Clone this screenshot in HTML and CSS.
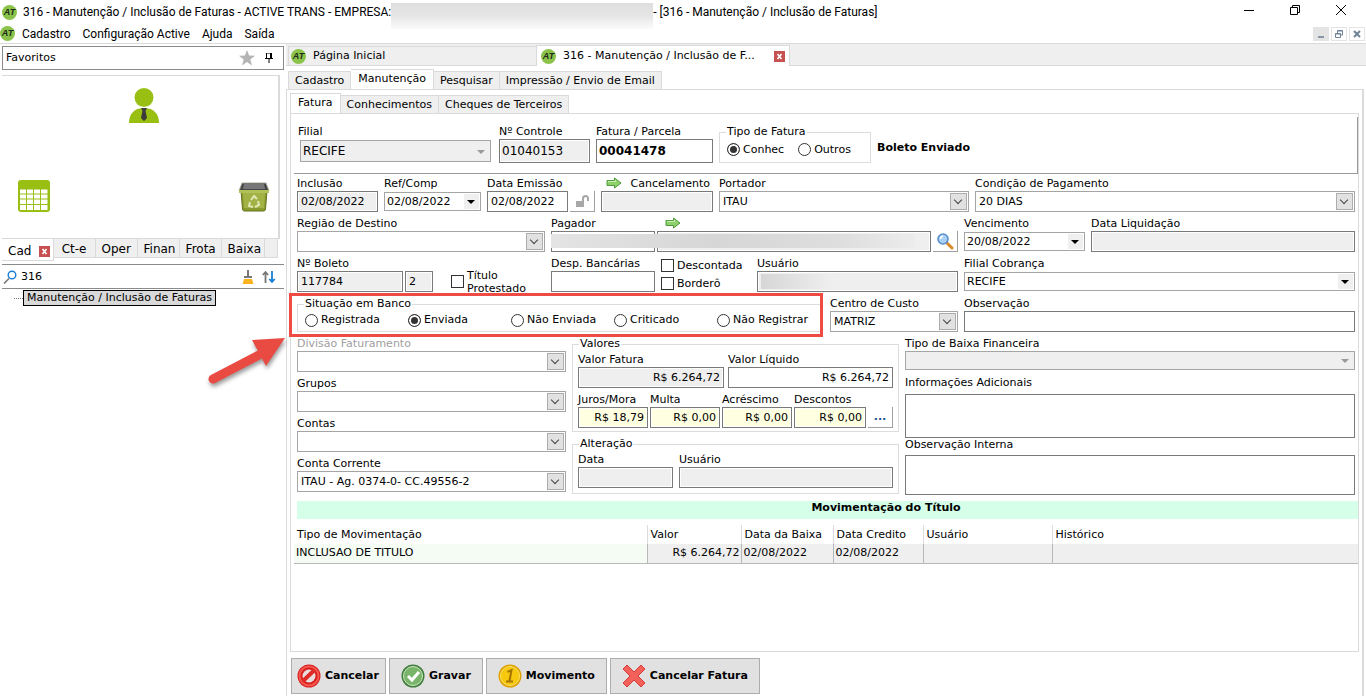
FILE: index.html
```html
<!DOCTYPE html>
<html lang="pt-BR">
<head>
    <meta charset="UTF-8">
    <meta name="viewport" content="width=device-width, initial-scale=1.0">
    <title>316 - Manutenção / Inclusão de Faturas</title>
    <link rel="stylesheet" href="styles.css">
</head>
<body>
    <svg class="sprite" aria-hidden="true">
        <symbol id="go" viewBox="0 0 16 12">
            <path d="M1 3.5h7.5V1L15 6l-6.500 5V8.500H1z" fill="#8fd06a" stroke="#4f9a3c" stroke-linejoin="round"/>
            <path d="M2 4.500h7.500V3" fill="none" stroke="#c9efb4"/>
        </symbol>
        <symbol id="close" viewBox="0 0 11 11">
            <path d="M0 0h11v11H0z" fill="#c75050"/>
            <path d="M3.500 3l4 5M7.500 3l-4 5" stroke="#fff" stroke-width="1.600"/>
        </symbol>
    </svg>

    <header class="titlebar">
        <span class="logo">AT</span>
        <span class="title">316 - Manutenção / Inclusão de Faturas - ACTIVE TRANS - EMPRESA:</span>
        <span class="title-mask"></span>
        <span class="title-end">- [316 - Manutenção / Inclusão de Faturas]</span>
        <div class="window-buttons">
            <button type="button" aria-label="Minimizar"><svg width="10" height="10" viewBox="0 0 10 10"><path d="M0 5.500h10" stroke="#000"/></svg></button>
            <button type="button" aria-label="Restaurar"><svg width="10" height="10" viewBox="0 0 10 10" fill="none" stroke="#000"><path d="M.5 2.500h7v7h-7zM2.500 2.500v-2h7v7h-2"/></svg></button>
            <button type="button" aria-label="Fechar"><svg width="10" height="10" viewBox="0 0 10 10"><path d="M0 0l10 10M10 0L0 10" stroke="#000"/></svg></button>
        </div>
    </header>

    <nav class="menubar">
        <span class="logo">AT</span>
        <a href="#">Cadastro</a>
        <a href="#">Configuração Active</a>
        <a href="#">Ajuda</a>
        <a href="#">Saída</a>
        <div class="mdi-buttons">
            <button type="button" class="filled" aria-label="Minimizar janela"><svg width="8" height="8" viewBox="0 0 8 8"><path d="M1 7h6" stroke="#8795a5" stroke-width="2"/></svg></button>
            <button type="button" aria-label="Restaurar janela"><svg width="8" height="8" viewBox="0 0 8 8" fill="none" stroke="#71839a"><path d="M.5 3.500h5v4h-5zM.5 4h5M2.500 3V.5h5v4.500H6M2.500 1h5"/></svg></button>
            <button type="button" aria-label="Fechar janela"><svg width="8" height="8" viewBox="0 0 8 8"><path d="M1 1l6 6M7 1L1 7" stroke="#71839a" stroke-width="2"/></svg></button>
        </div>
    </nav>

    <div class="workspace">
        <aside class="sidebar">
            <div class="fav-header">
                <span>Favoritos</span>
                <svg width="16" height="16" viewBox="0 0 16 16"><path d="M8 0l2.100 5.600 5.900.2-4.700 3.700L13 15.500 8 12l-5 3.500 1.700-6L0 5.800l5.900-.2z" fill="#b4b4b4"/></svg>
                <svg width="8" height="10" viewBox="0 0 8 10"><path d="M1.500 0h5v5.500h-5zM0 5.500h8M4 6v4" fill="none" stroke="#000"/><path d="M5.500 0v5.500" stroke="#000"/></svg>
            </div>
            <div class="fav-panel">
                <svg class="fav-user" width="30" height="35" viewBox="0 0 30 35">
                    <circle cx="15" cy="9.500" r="9.500" fill="#98bf11"/>
                    <path d="M0 35C0 24 7 20 15 20s15 4 15 15z" fill="#98bf11"/>
                    <path d="M12 20h6l-1.500 3L18 30l-3 3-3-3 1.500-7z" fill="#3b3b3b"/>
                </svg>
                <svg class="fav-table" width="32" height="32" viewBox="0 0 32 32">
                    <rect width="32" height="32" rx="3" fill="#98bf11"/>
                    <path d="M2 9.500h6v4H2zM9 9.500h6v4H9zM16 9.500h6v4h-6zM23 9.500h6.500v4H23zM2 14.500h6v4H2zM9 14.500h6v4H9zM16 14.500h6v4h-6zM23 14.500h6.500v4H23zM2 19.500h6v4.500H2zM9 19.500h6v4.500H9zM16 19.500h6v4.500h-6zM23 19.500h6.500v4.500H23zM2 25h6v5H2zM9 25h6v5H9zM16 25h6v5h-6zM23 25h6.500v5H23z" fill="#fff"/>
                </svg>
                <svg class="fav-trash" width="32" height="30" viewBox="0 0 32 30">
                    <path d="M3 9h26l-1.500 18q0 2-2 2h-19q-2 0-2-2z" fill="#8b9a2f" stroke="#66731f"/>
                    <path d="M5 11h22l-1 15H6z" fill="#a3b244"/>
                    <path d="M4 1h24l3 8H1z" fill="#454545" stroke="#a9a99e"/>
                    <path d="M6 2h20l1 5H5z" fill="#77777a"/>
                    <path d="M1 8h30v3H1z" fill="#b2c258"/>
                    <path d="M13 18l3-4 3 3M20 19l1 4-4 2M15 25l-4-1 1-4" fill="none" stroke="#e0e8b8" stroke-width="2"/>
                </svg>
            </div>
            <nav class="fav-tabs">
                <a href="#" class="active">Cad <svg class="close"><use href="#close"/></svg></a>
                <a href="#">Ct-e</a>
                <a href="#">Oper</a>
                <a href="#">Finan</a>
                <a href="#">Frota</a>
                <a href="#">Baixa</a>
                <span></span>
            </nav>
            <div class="search">
                <svg width="14" height="14" viewBox="0 0 14 14" fill="none"><path d="M6 8.500L1 13.500" stroke="#777" stroke-width="1.600"/><circle cx="9" cy="5" r="3.800" stroke="#1a7fd4" stroke-width="1.400"/></svg>
                <input type="text" aria-label="Pesquisar menu" value="316">
                <svg width="12" height="14" viewBox="0 0 12 14"><path d="M5 0h2v6h3v2H2V6h3z" fill="#777"/><path d="M2 9h8l1.500 5H.5z" fill="#fbb11b"/></svg>
                <svg width="14" height="14" viewBox="0 0 14 14" fill="none" stroke-width="1.800"><path d="M3.500 13V2M.8 5l2.700-3 2.700 3" stroke="#777"/><path d="M10 1v11M7.300 9l2.700 3 2.700-3" stroke="#1a7fd4"/></svg>
            </div>
            <div class="tree"><a href="#">Manutenção / Inclusão de Faturas</a></div>
        </aside>

        <main class="content">
            <nav class="doc-tabs">
                <a href="#"><span class="logo">AT</span>Página Inicial</a>
                <a href="#" class="active"><span class="logo">AT</span>316 - Manutenção / Inclusão de F...<svg class="close"><use href="#close"/></svg></a>
            </nav>
            <nav class="tabs">
                <a href="#">Cadastro</a>
                <a href="#" class="active">Manutenção</a>
                <a href="#">Pesquisar</a>
                <a href="#">Impressão / Envio de Email</a>
            </nav>
            <section class="page">
                <nav class="tabs inner">
                    <a href="#" class="active">Fatura</a>
                    <a href="#">Conhecimentos</a>
                    <a href="#">Cheques de Terceiros</a>
                </nav>
                <form class="invoice">
                    <div class="invoice-head">
                        <div class="field">
                            <label for="filial">Filial</label>
                            <span class="select flat off"><select id="filial" disabled><option>RECIFE</option></select></span>
                        </div>
                        <div class="field">
                            <label for="controle">Nº Controle</label>
                            <input type="text" id="controle" value="01040153" class="big" readonly>
                        </div>
                        <div class="field">
                            <label for="parcela">Fatura / Parcela</label>
                            <input type="text" id="parcela" value="00041478" class="big strong">
                        </div>
                        <fieldset class="type">
                            <legend>Tipo de Fatura</legend>
                            <label><input type="radio" name="tipo" checked>Conhec</label>
                            <label><input type="radio" name="tipo">Outros</label>
                        </fieldset>
                        <strong class="status">Boleto Enviado</strong>
                    </div>

                    <div class="row row-dates">
                        <div class="field">
                            <label for="inclusao">Inclusão</label>
                            <input type="text" id="inclusao" value="02/08/2022" readonly>
                        </div>
                        <div class="field">
                            <label for="ref">Ref/Comp</label>
                            <span class="select flat"><select id="ref"><option>02/08/2022</option></select></span>
                        </div>
                        <div class="field">
                            <label for="emissao">Data Emissão</label>
                            <div class="group">
                                <input type="text" id="emissao" value="02/08/2022">
                                <button type="button" class="tool" aria-label="Desbloquear data"><svg width="14" height="12" viewBox="0 0 14 12"><path d="M1 6h8v6H1z" fill="#a8a8a8"/><path d="M8 6V3.500q0-2.500 2.500-2.500T13 3.500V6" fill="none" stroke="#a8a8a8" stroke-width="2"/></svg></button>
                            </div>
                        </div>
                        <div class="field">
                            <label for="cancelamento" class="with-icon"><svg class="go"><use href="#go"/></svg>Cancelamento</label>
                            <input type="text" id="cancelamento" readonly>
                        </div>
                        <div class="field">
                            <label for="portador">Portador</label>
                            <span class="select"><select id="portador"><option>ITAU</option></select></span>
                        </div>
                        <div class="field">
                            <label for="condicao">Condição de Pagamento</label>
                            <span class="select"><select id="condicao"><option>20 DIAS</option></select></span>
                        </div>
                    </div>

                    <div class="row row-payer">
                        <div class="field">
                            <label for="regiao">Região de Destino</label>
                            <span class="select"><select id="regiao"><option></option></select></span>
                        </div>
                        <div class="field payer">
                            <label for="pagador">Pagador<svg class="go"><use href="#go"/></svg></label>
                            <div class="group">
                                <input type="text" id="pagador" class="code">
                                <input type="text" aria-label="Nome do pagador" readonly>
                                <button type="button" class="tool" aria-label="Buscar pagador"><svg width="18" height="18" viewBox="0 0 18 18"><path d="M10 10l6 6" stroke="#d98a2b" stroke-width="3" stroke-linecap="round"/><circle cx="7" cy="7" r="5" fill="#a9d0f5" stroke="#5b8fcb" stroke-width="1.600"/><path d="M4.500 7q0-2.500 2.500-2.800" fill="none" stroke="#fff" stroke-width="1.400"/></svg></button>
                            </div>
                            <span class="masked payer-mask"></span>
                        </div>
                        <div class="field">
                            <label for="vencimento">Vencimento</label>
                            <span class="select flat"><select id="vencimento"><option>20/08/2022</option></select></span>
                        </div>
                        <div class="field">
                            <label for="liquidacao">Data Liquidação</label>
                            <input type="text" id="liquidacao" readonly>
                        </div>
                    </div>

                    <div class="row row-slip">
                        <div class="field slip">
                            <label for="boleto">Nº Boleto</label>
                            <div class="group">
                                <input type="text" id="boleto" value="117784" readonly>
                                <input type="text" class="digit" aria-label="Dígito do boleto" value="2" readonly>
                            </div>
                        </div>
                        <label class="check protest"><input type="checkbox"><span>Título<br>Protestado</span></label>
                        <div class="field">
                            <label for="despesas">Desp. Bancárias</label>
                            <input type="text" id="despesas">
                        </div>
                        <div class="checks">
                            <label class="check"><input type="checkbox">Descontada</label>
                            <label class="check"><input type="checkbox">Borderô</label>
                        </div>
                        <div class="field user">
                            <label for="usuario">Usuário</label>
                            <input type="text" id="usuario" readonly>
                            <span class="masked user-mask"></span>
                        </div>
                        <div class="field">
                            <label for="cobranca">Filial Cobrança</label>
                            <span class="select flat"><select id="cobranca"><option>RECIFE</option></select></span>
                        </div>
                    </div>

                    <div class="row row-bank">
                        <fieldset class="bank">
                            <legend>Situação em Banco</legend>
                            <label><input type="radio" name="situacao">Registrada</label>
                            <label><input type="radio" name="situacao" checked>Enviada</label>
                            <label><input type="radio" name="situacao">Não Enviada</label>
                            <label><input type="radio" name="situacao">Criticado</label>
                            <label><input type="radio" name="situacao">Não Registrar</label>
                            <span class="highlight"></span>
                            <svg class="pointer" width="92" height="60" viewBox="0 0 92 60"><path d="M10 48L56 24" stroke="#e94b43" stroke-width="9" stroke-linecap="round"/><path d="M49 9L82 7 63 35z" fill="#e94b43"/></svg>
                        </fieldset>
                        <div class="field">
                            <label for="custo">Centro de Custo</label>
                            <span class="select"><select id="custo"><option>MATRIZ</option></select></span>
                        </div>
                        <div class="field">
                            <label for="observacao">Observação</label>
                            <input type="text" id="observacao">
                        </div>
                    </div>

                    <div class="details">
                        <div class="accounts">
                            <div class="field">
                                <label for="divisao" class="muted">Divisão Faturamento</label>
                                <span class="select"><select id="divisao"><option></option></select></span>
                            </div>
                            <div class="field">
                                <label for="grupos">Grupos</label>
                                <span class="select"><select id="grupos"><option></option></select></span>
                            </div>
                            <div class="field">
                                <label for="contas">Contas</label>
                                <span class="select"><select id="contas"><option></option></select></span>
                            </div>
                            <div class="field">
                                <label for="corrente">Conta Corrente</label>
                                <span class="select"><select id="corrente"><option>ITAU - Ag. 0374-0- CC.49556-2</option></select></span>
                            </div>
                        </div>

                        <div class="amounts">
                            <fieldset class="box">
                                <legend>Valores</legend>
                                <div class="row row-totals">
                                    <div class="field">
                                        <label for="valor">Valor Fatura</label>
                                        <input type="text" id="valor" class="money" value="R$ 6.264,72" readonly>
                                    </div>
                                    <div class="field">
                                        <label for="liquido">Valor Líquido</label>
                                        <input type="text" id="liquido" class="money" value="R$ 6.264,72">
                                    </div>
                                </div>
                                <div class="row row-extras">
                                    <div class="field">
                                        <label for="juros">Juros/Mora</label>
                                        <input type="text" id="juros" class="money yellow" value="R$ 18,79">
                                    </div>
                                    <div class="field">
                                        <label for="multa">Multa</label>
                                        <input type="text" id="multa" class="money yellow" value="R$ 0,00">
                                    </div>
                                    <div class="field">
                                        <label for="acrescimo">Acréscimo</label>
                                        <input type="text" id="acrescimo" class="money yellow" value="R$ 0,00">
                                    </div>
                                    <div class="field">
                                        <label for="descontos">Descontos</label>
                                        <input type="text" id="descontos" class="money yellow" value="R$ 0,00">
                                    </div>
                                    <button type="button" class="tool">...</button>
                                </div>
                            </fieldset>
                            <fieldset class="box">
                                <legend>Alteração</legend>
                                <div class="row row-change">
                                    <div class="field">
                                        <label for="alt-data">Data</label>
                                        <input type="text" id="alt-data" readonly>
                                    </div>
                                    <div class="field">
                                        <label for="alt-usuario">Usuário</label>
                                        <input type="text" id="alt-usuario" readonly>
                                    </div>
                                </div>
                            </fieldset>
                        </div>

                        <div class="notes">
                            <div class="field">
                                <label for="baixa">Tipo de Baixa Financeira</label>
                                <span class="select flat off"><select id="baixa" disabled><option></option></select></span>
                            </div>
                            <div class="field info">
                                <label for="info">Informações Adicionais</label>
                                <textarea id="info"></textarea>
                            </div>
                            <div class="field internal">
                                <label for="interna">Observação Interna</label>
                                <textarea id="interna"></textarea>
                            </div>
                        </div>
                    </div>

                    <h2 class="moves-title">Movimentação do Título</h2>
                    <table class="moves">
                        <thead>
                            <tr>
                                <th class="kind">Tipo de Movimentação</th>
                                <th class="value">Valor</th>
                                <th class="paid">Data da Baixa</th>
                                <th class="credit">Data Credito</th>
                                <th class="who">Usuário</th>
                                <th>Histórico</th>
                            </tr>
                        </thead>
                        <tbody>
                            <tr>
                                <td class="current">INCLUSAO DE TITULO</td>
                                <td class="number">R$ 6.264,72</td>
                                <td>02/08/2022</td>
                                <td>02/08/2022</td>
                                <td></td>
                                <td></td>
                            </tr>
                        </tbody>
                    </table>
                </form>

                <div class="actions">
                    <button type="button"><svg width="24" height="24" viewBox="0 0 24 24"><circle cx="12" cy="12" r="11.500" fill="#d8201f"/><circle cx="12" cy="12" r="9.500" fill="none" stroke="#f4584f" stroke-width="2"/><circle cx="12" cy="12" r="6.500" fill="#e9dede"/><path d="M6 17L17.500 6" stroke="#e02a26" stroke-width="4"/></svg>Cancelar</button>
                    <button type="button"><svg width="24" height="24" viewBox="0 0 24 24"><circle cx="12" cy="12" r="11.500" fill="#3f7d3a"/><circle cx="12" cy="12" r="9.500" fill="#78b56a" stroke="#cfe8c6"/><path d="M7 12l4 4 7-8" fill="none" stroke="#fff" stroke-width="3"/></svg>Gravar</button>
                    <button type="button"><svg width="24" height="24" viewBox="0 0 24 24"><circle cx="12" cy="12" r="11.500" fill="#e0a100"/><circle cx="12" cy="12" r="9.500" fill="#f6c90e" stroke="#fbe36a"/><path d="M9.500 8l4-2-2 11M8 17.500h7" fill="none" stroke="#a87400" stroke-width="2"/></svg>Movimento</button>
                    <button type="button"><svg width="24" height="24" viewBox="0 0 24 24"><path d="M5 1l7 7 7-7 4 4-7 7 7 7-4 4-7-7-7 7-4-4 7-7-7-7z" fill="#f4605a" stroke="#d43a36"/></svg>Cancelar Fatura</button>
                </div>
            </section>
        </main>
    </div>
</body>
</html>
```

FILE: styles.css
```css
* {
    margin: 0;
    padding: 0;
    box-sizing: border-box;
}

body {
    font-family: "DejaVu Sans", Verdana, sans-serif;
    font-size: 11px;
    line-height: 14px;
    color: #000;
    background-color: #fff;
    min-height: 100vh;
    display: flex;
    flex-direction: column;
}

input, select, textarea, button {
    font: inherit;
    color: inherit;
    border-radius: 0;
}

button {
    border: none;
    background: none;
}

a {
    color: inherit;
    text-decoration: none;
}

svg {
    display: block;
    flex: none;
}

.sprite {
    position: absolute;
    width: 0;
    height: 0;
}

.logo {
    flex: none;
    width: 15px;
    height: 15px;
    border-radius: 50%;
    background-color: #8bc34a;
    color: #1f2a1c;
    font: italic bold 9px/15px "Liberation Sans", Arial, sans-serif;
    text-align: center;
}

.close {
    width: 11px;
    height: 11px;
}

.masked {
    background: linear-gradient(90deg, #e4e4e4, #d6d6d6 45%, #dedede 80%, #ececec);
}

/* title bar and menu */
.titlebar, .menubar {
    display: flex;
    align-items: center;
    font-family: Roboto, "Segoe UI", sans-serif;
    font-size: 12px;
}

.titlebar {
    height: 24px;
    padding-left: 2px;
}

.title {
    margin-left: 6px;
    white-space: nowrap;
}

.title-mask {
    align-self: flex-start;
    width: 262px;
    height: 26px;
    margin-top: 3px;
    background: linear-gradient(#dedede, #e6e6e6 50%, #fbfbfb);
}

.title-end {
    white-space: nowrap;
}

.window-buttons {
    display: flex;
    gap: 36px;
    margin-left: auto;
    padding: 0 20px 4px 0;
}

.menubar {
    height: 19px;
    gap: 12px;
}

.menubar .logo {
    margin-right: -5px;
}

.mdi-buttons {
    display: flex;
    gap: 2px;
    margin-left: auto;
    padding-right: 1px;
}

.mdi-buttons button {
    width: 16px;
    height: 14px;
    padding: 2px 3px;
    border: 1px solid #e4e4e4;
}

.mdi-buttons .filled {
    background-color: #e4e4e4;
}

.workspace {
    flex: 1;
    display: flex;
    border-top: 1px solid #dadada;
}

/* favourites */
.sidebar {
    flex: none;
    width: 286px;
    padding: 2px 2px 0 2px;
}

.fav-header {
    display: flex;
    align-items: center;
    gap: 10px;
    height: 24px;
    padding: 0 10px 0 3px;
    border: 1px solid #8a8a8a;
}

.fav-header span {
    flex: 1;
}

.fav-panel {
    display: grid;
    grid-template-columns: 1fr 1fr 1fr;
    grid-template-rows: 1fr 1fr;
    height: 164px;
    margin: 5px 4px 0 0;
    padding: 12px 8px 26px 16px;
    border: solid #dadada;
    border-width: 1px 2px 1px 0;
}

.fav-user {
    grid-column: 2;
    justify-self: center;
}

.fav-table {
    grid-area: 2 / 1;
    align-self: end;
}

.fav-trash {
    grid-area: 2 / 3;
    justify-self: end;
    align-self: end;
}

.fav-tabs {
    display: flex;
    height: 22px;
    margin-right: 6px;
}

.fav-tabs a, .fav-tabs span {
    padding: 3px 6px 0;
    height: 19px;
    background-color: #efefef;
    border: solid #dadada;
    border-width: 0 1px 1px 0;
    font-size: 12px;
    text-align: center;
}

.fav-tabs a {
    min-width: 42px;
}

.fav-tabs span {
    flex: 1;
}

.fav-tabs .active {
    display: flex;
    gap: 8px;
    height: 22px;
    padding-top: 5px;
    background-color: #fff;
}

.fav-tabs .close {
    margin-top: 2px;
}

.search {
    display: flex;
    align-items: center;
    gap: 8px;
    height: 25px;
    margin-top: 3px;
    padding: 0 8px 0 1px;
    border: solid #8a8a8a;
    border-width: 1px 0;
}

.search input {
    flex: 1;
    min-width: 0;
    margin-left: -4px;
    border: none;
}

.tree {
    display: flex;
    align-items: center;
    margin-top: 1px;
    padding-left: 12px;
}

.tree::before {
    content: '';
    width: 9px;
    border-top: 1px dotted #777;
}

.tree a {
    padding: 0 3px;
    border: 1px solid #000;
    background-color: #d9d9d9;
}

/* tabs */
.content {
    flex: 1;
    min-width: 0;
    display: flex;
    flex-direction: column;
}

.doc-tabs {
    display: flex;
    height: 22px;
    padding-left: 2px;
    background-color: #efefef;
    border-bottom: 1px solid #dadada;
}

.doc-tabs a {
    display: flex;
    align-items: center;
    gap: 7px;
    width: 248px;
    margin-top: 2px;
    padding: 0 2px;
    border: solid #dadada;
    border-width: 1px 0 0 1px;
}

.doc-tabs .active {
    width: 254px;
    height: 21px;
    margin-top: 1px;
    padding: 0 4px;
    border-right-width: 1px;
    background-color: #fff;
}

.doc-tabs .close {
    margin-left: auto;
}

.tabs {
    display: flex;
    align-items: flex-end;
    height: 23px;
    padding-left: 2px;
}

.tabs a {
    height: 18px;
    padding: 2px 6px 0;
    border: solid #dadada;
    border-width: 1px 1px 0 0;
    background-color: #efefef;
}

.tabs a:first-child {
    border-left-width: 1px;
}

.tabs .active {
    height: 21px;
    margin-bottom: -1px;
    padding: 2px 7px 0;
    background-color: #fff;
}

.page {
    flex: 1;
    display: flex;
    flex-direction: column;
    margin-right: 2px;
    padding: 0 3px;
    border: solid #dadada;
    border-width: 1px 2px 0 1px;
}

.tabs.inner {
    padding-left: 0;
}

/* invoice form */
.invoice {
    flex: 1;
    padding: 3px 0 0 3px;
    border: 1px solid #dadada;
}

.invoice-head {
    display: flex;
    gap: 6px;
    height: 57px;
    padding: 8px 0 0 4px;
    border: solid #9a9a9a;
    border-width: 0 1px 1px 0;
}

.invoice-head .field {
    padding-right: 0;
}

.invoice-head .field:first-child {
    width: 195px;
}

.invoice-head .field:nth-child(2) {
    width: 91px;
}

.invoice-head .field:nth-child(3) {
    width: 117px;
}

.invoice-head .flat {
    margin: 1px 2px;
}

.row {
    display: grid;
    height: 40px;
    margin: 0 3px;
}

.invoice-head + .row {
    margin-top: 3px;
}

.row-dates {
    grid-template-columns: 87px 103px 114px 118px 256px 1fr;
}

.row-payer {
    grid-template-columns: 254px 413px 127px 1fr;
}

.row-slip {
    grid-template-columns: 154px 100px 110px 96px 207px 1fr;
}

.row-bank {
    grid-template-columns: 533px 134px 1fr;
}

.field {
    display: flex;
    flex-direction: column;
    min-width: 0;
    padding-right: 6px;
}

.field:last-child {
    padding-right: 0;
}

.field label {
    height: 14px;
    white-space: nowrap;
}

.field .with-icon {
    display: flex;
    justify-content: space-between;
    padding: 0 3px 0 5px;
}

.go {
    width: 16px;
    height: 12px;
}

.muted {
    color: #a0a0a0;
}

.field input, .field textarea {
    width: 100%;
    min-width: 0;
    height: 21px;
    padding: 0 3px 1px;
    border: 1px solid #7a7a7a;
    background-color: #fff;
}

.field input:read-only {
    background-color: #efefef;
    box-shadow: inset 0 0 0 1px #fff;
}

.field .big {
    height: 24px;
    padding: 0 2px 1px;
    font-size: 12px;
}

.field .strong {
    font-weight: bold;
}

.field .money {
    text-align: right;
}

.field .yellow {
    background-color: #ffffe1;
    box-shadow: inset 0 0 0 1px #fff;
}

.group {
    display: flex;
    gap: 2px;
}

.group .code {
    flex: none;
    width: 104px;
}

.group .digit {
    flex: none;
    width: 28px;
}

.tool {
    flex: none;
    width: 25px;
    height: 21px;
    display: flex;
    align-items: center;
    justify-content: center;
    border: solid #a0a0a0;
    border-width: 0 1px 1px 0;
}

/* drop-downs */
.select {
    display: block;
    position: relative;
    height: 21px;
}

.select select {
    display: block;
    width: 100%;
    height: 100%;
    padding: 0 20px 0 3px;
    border: 1px solid #a5a5a5;
    background-color: #fff;
    appearance: none;
}

.select::before {
    content: '';
    position: absolute;
    top: 2px;
    right: 2px;
    width: 17px;
    height: 17px;
    border: 1px solid #adadad;
    background-color: #e1e1e1;
    pointer-events: none;
}

.select::after {
    content: '';
    position: absolute;
    top: 6px;
    right: 8px;
    width: 6px;
    height: 6px;
    border: solid #444;
    border-width: 0 1px 1px 0;
    transform: rotate(45deg);
    pointer-events: none;
}

.select::before, .select::after {
    box-sizing: border-box;
}

.select.flat {
    height: 19px;
    margin-top: 1px;
}

.select.flat select {
    padding-left: 2px;
}

.select.flat::before {
    height: 15px;
    width: 15px;
    border: none;
    background-color: #efefef;
}

.select.flat::after {
    top: 8px;
    right: 6px;
    width: 0;
    height: 0;
    border: solid transparent;
    border-width: 4px 4px 0;
    border-top-color: #000;
    transform: none;
}

.select.off select {
    background-color: #efefef;
    color: #000;
    opacity: 1;
}

.select.off::after {
    border-top-color: #999;
}

.invoice-head .select.flat {
    height: 22px;
    font-size: 12px;
}

.invoice-head .select.flat::after {
    top: 10px;
}

/* radios and check boxes */
fieldset {
    min-width: 0;
    border: 1px solid #dcdcdc;
}

legend {
    padding: 0 1px;
}

input[type="radio"], input[type="checkbox"] {
    flex: none;
    width: 13px;
    height: 13px;
    border: 1px solid #333;
    background-color: #fff;
    appearance: none;
}

input[type="radio"] {
    border-radius: 50%;
}

input[type="radio"]:checked {
    background-color: #333;
    box-shadow: inset 0 0 0 2px #fff;
}

.type, .bank {
    display: flex;
    position: relative;
}

.type label, .bank label, .check {
    display: flex;
    align-items: center;
    gap: 3px;
    white-space: nowrap;
}

.type {
    width: 152px;
    height: 38px;
    gap: 14px;
    padding: 0 7px 2px;
}

.type legend {
    margin-left: -1px;
}

.status {
    padding-top: 16px;
}

.bank {
    width: 525px;
    height: 35px;
    padding: 0 0 2px 7px;
}

.bank legend {
    margin-left: -1px;
}

.bank label {
    width: 103px;
}

/* marks the bank status group */
.highlight {
    position: absolute;
    top: -18px;
    left: -9px;
    width: 534px;
    height: 44px;
    border: 3px solid #ee4b45;
    pointer-events: none;
}

.pointer {
    position: absolute;
    top: 20px;
    left: -95px;
    filter: drop-shadow(1px 3px 2px rgba(0, 0, 0, 0.4));
    pointer-events: none;
}

.slip {
    padding-right: 18px;
}

.check {
    line-height: 13px;
}

.protest {
    padding-top: 9px;
}

.checks {
    display: flex;
    flex-direction: column;
    gap: 5px;
    padding-top: 2px;
}

.payer, .user {
    position: relative;
}

.payer .go {
    display: inline-block;
    margin-left: 69px;
    vertical-align: top;
}

.payer-mask {
    position: absolute;
    top: 17px;
    left: 0;
    width: 364px;
    height: 14px;
}

.user-mask {
    position: absolute;
    top: 17px;
    left: 4px;
    width: 72px;
    height: 15px;
    background: linear-gradient(90deg, #d6d6d6, #efefef);
}

/* accounts, values and notes */
.details {
    display: grid;
    grid-template-columns: 275px 333px 1fr;
    margin: 0 3px;
}

.accounts .field {
    height: 40px;
    padding-right: 6px;
}

.amounts {
    padding-right: 6px;
}

.box {
    padding: 2px 5px 0;
}

.box legend {
    margin-left: 1px;
}

.box .row {
    margin: 0;
}

.box:first-child {
    height: 95px;
    margin-bottom: 5px;
}

.box:last-child {
    height: 57px;
}

.row-totals {
    grid-template-columns: 150px 1fr;
}

.row-totals .field:first-child {
    padding-right: 4px;
}

.row-extras {
    grid-template-columns: 72px 72px 72px 74px 1fr;
}

.row-extras .field {
    padding-right: 2px;
}

.row-extras .tool {
    margin-top: 14px;
    color: #1b4f8f;
    font-weight: bold;
}

.row-change {
    grid-template-columns: 101px 1fr;
}

.notes .field {
    height: 39px;
    padding: 0;
}

.notes .select.flat {
    margin-top: 0;
}

.notes textarea {
    flex: 1;
    resize: none;
}

.notes .info {
    height: 62px;
}

.info label {
    margin-bottom: 4px;
}

.notes .internal {
    height: 57px;
}

.internal label {
    margin-bottom: 3px;
}

.moves-title {
    margin: 4px 0 6px 3px;
    padding: 0 0 4px 117px;
    background-color: #d5ffe9;
    font-size: 11px;
    line-height: 14px;
    text-align: center;
}

.moves {
    width: 100%;
    table-layout: fixed;
    border-collapse: collapse;
}

.moves th, .moves td {
    height: 19px;
    padding: 0 2px;
    border-right: 1px solid #dcdcdc;
    font-weight: normal;
    text-align: left;
}

.moves th:last-child, .moves td:last-child {
    border-right: none;
}

.moves th {
    padding-left: 3px;
}

.moves td {
    background-color: #efefef;
    border-right-color: #b8b8b8;
    border-bottom: 1px solid #b8b8b8;
}

.moves .current {
    background-color: #f4fcf4;
}

.moves .number {
    padding-right: 1px;
    text-align: right;
}

.kind {
    width: 353px;
}

.value {
    width: 94px;
}

.paid {
    width: 92px;
}

.credit {
    width: 90px;
}

.who {
    width: 129px;
}

.actions {
    display: flex;
    gap: 3px;
    padding: 6px 0 2px 1px;
}

.actions button {
    display: flex;
    align-items: center;
    gap: 4px;
    height: 36px;
    padding: 0 11px;
    border: 1px solid #adadad;
    background-color: #e1e1e1;
    font-weight: bold;
}

.actions button:first-child {
    padding: 0 6px 0 5px;
}
```
